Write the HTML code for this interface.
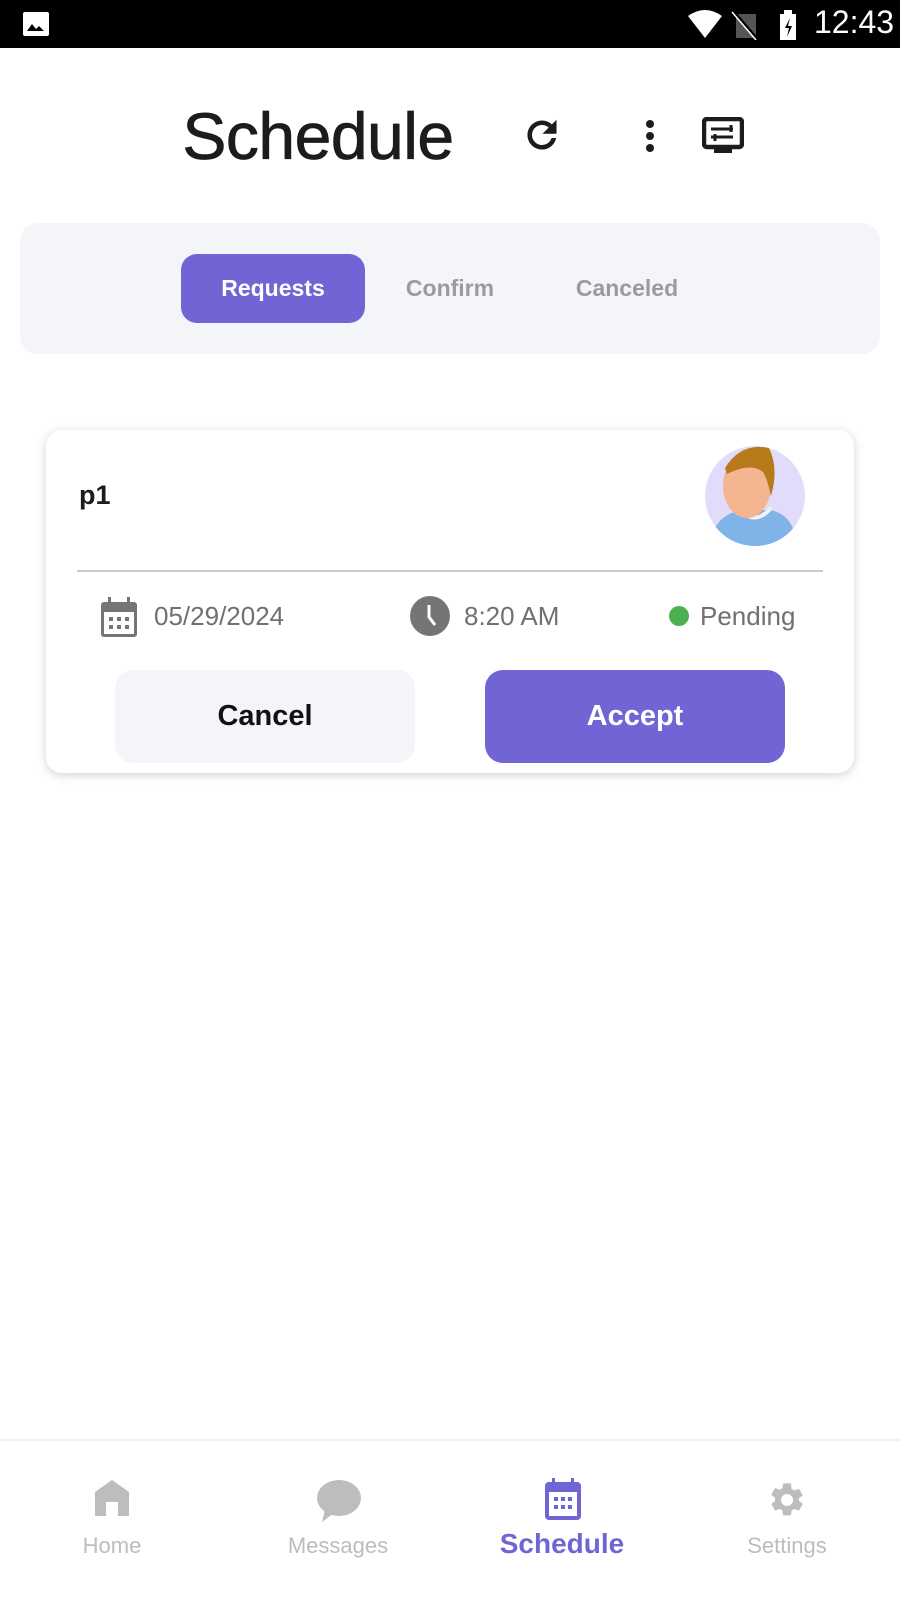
<!DOCTYPE html>
<html><head><meta charset="utf-8"><style>
*{margin:0;padding:0;box-sizing:border-box}
body{width:900px;height:1600px;background:#fff;font-family:"Liberation Sans",sans-serif;position:relative;overflow:hidden}
.a{position:absolute}
.status{left:0;top:0;width:900px;height:48px;background:#000}
.title{left:0;width:636px;text-align:center;top:98px;font-size:66px;color:#1c1c1e;letter-spacing:-0.5px;-webkit-text-stroke:0.8px #1c1c1e}
.tabs{left:20px;top:223px;width:860px;height:131px;background:#f4f5f9;border-radius:18px}
.pill{left:181px;top:254px;width:184px;height:69px;background:#7165d6;border-radius:16px;color:#fff;font-size:23px;font-weight:bold;text-align:center;line-height:69px}
.tab{top:254px;line-height:69px;font-size:23px;font-weight:bold;color:#9a9aa2;text-align:center;width:160px}
.card{left:46px;top:430px;width:808px;height:343px;background:#fff;border-radius:16px;box-shadow:0 2px 10px rgba(0,0,0,.18)}
.info{font-size:26px;color:#707070;top:601px}
.btn{top:670px;width:300px;height:93px;border-radius:18px;text-align:center;line-height:93px;font-size:29px;font-weight:bold}
.nav{left:0;top:1439px;width:900px;height:161px;border-top:2px solid #f2f2f2}
.lbl{top:1533px;width:200px;text-align:center;font-size:22px;color:#bdbdbd}
</style></head><body>
<div class="a status"></div>
<svg class="a" style="left:23px;top:12px" width="26" height="24" viewBox="0 0 26 24"><rect x="0" y="0" width="26" height="24" rx="2" fill="#fff"/><path d="M4 19l5-7 4 5 3-3 5 5z" fill="#000"/></svg>
<svg class="a" style="left:688px;top:8px" width="120" height="32" viewBox="0 0 120 32"><path d="M0 8 Q17 -4 34 8 L17 30Z" fill="#fff"/><rect x="48" y="6" width="20" height="24" fill="#555"/><path d="M46 4 L70 32" stroke="#000" stroke-width="3"/><path d="M44 4 L68 32" stroke="#fff" stroke-width="1.5"/><rect x="92" y="6" width="16" height="26" fill="#fff"/><rect x="96" y="2" width="8" height="5" fill="#fff"/><path d="M102 10 l-5 10 h4 l-2 9 5-11 h-4z" fill="#000"/></svg>
<div class="a" style="left:814px;top:4px;font-size:32px;color:#fff">12:43</div>
<div class="a title">Schedule</div>
<svg class="a" style="left:521px;top:114px" width="42" height="42" viewBox="0 0 24 24"><path fill="#1c1c1e" d="M17.65 6.35A7.96 7.96 0 0 0 12 4a8 8 0 1 0 7.73 10h-2.08A6 6 0 1 1 12 6c1.66 0 3.14.69 4.22 1.78L13 11h7V4l-2.35 2.35z" stroke="#1c1c1e" stroke-width="0.6"/></svg>
<svg class="a" style="left:640px;top:116px" width="20" height="40" viewBox="0 0 20 40"><circle cx="10" cy="8" r="4" fill="#1c1c1e"/><circle cx="10" cy="20" r="4" fill="#1c1c1e"/><circle cx="10" cy="32" r="4" fill="#1c1c1e"/></svg>
<svg class="a" style="left:702px;top:117px" width="42" height="38" viewBox="0 0 42 38"><rect x="2" y="2" width="38" height="28" rx="3" fill="none" stroke="#1c1c1e" stroke-width="4.5"/><rect x="12" y="29" width="18" height="7" fill="#1c1c1e"/><path d="M9 12h22M9 20h22" stroke="#1c1c1e" stroke-width="3"/><path d="M29 8v7M13 17v7" stroke="#1c1c1e" stroke-width="3"/></svg>
<div class="a tabs"></div>
<div class="a pill">Requests</div>
<div class="a tab" style="left:370px">Confirm</div>
<div class="a tab" style="left:547px">Canceled</div>
<div class="a card"></div>
<div class="a" style="left:79px;top:480px;font-size:27px;font-weight:bold;color:#1c1c1e">p1</div>
<svg class="a" style="left:705px;top:446px" width="100" height="100" viewBox="0 0 100 100"><defs><clipPath id="c"><circle cx="50" cy="50" r="50"/></clipPath></defs><circle cx="50" cy="50" r="50" fill="#e2dcfc"/><g clip-path="url(#c)"><path d="M4 100 Q8 70 36 64 L66 64 Q90 70 92 100Z" fill="#80b4e8"/><path d="M36 64 Q50 80 66 62" fill="none" stroke="#f2f2f2" stroke-width="4"/><ellipse cx="42" cy="40" rx="24" ry="32" fill="#f4b590"/><path d="M20 22 Q36 -4 64 2 Q74 22 66 50 Q62 32 58 26 Q46 16 22 28Z" fill="#b87a18"/></g></svg>
<div class="a" style="left:77px;top:570px;width:746px;height:2px;background:#c9c9d6"></div>
<svg class="a" style="left:101px;top:597px" width="36" height="40" viewBox="0 0 36 40"><rect x="0" y="5" width="36" height="35" rx="3" fill="#757575"/><rect x="7" y="0" width="3" height="8" fill="#757575"/><rect x="26" y="0" width="3" height="8" fill="#757575"/><rect x="3" y="15" width="30" height="22" fill="#fff"/><g fill="#757575"><rect x="8" y="20" width="4" height="4"/><rect x="16" y="20" width="4" height="4"/><rect x="24" y="20" width="4" height="4"/><rect x="8" y="28" width="4" height="4"/><rect x="16" y="28" width="4" height="4"/><rect x="24" y="28" width="4" height="4"/></g></svg>
<div class="a info" style="left:154px">05/29/2024</div>
<svg class="a" style="left:410px;top:596px" width="40" height="40" viewBox="0 0 40 40"><circle cx="20" cy="20" r="20" fill="#757575"/><path d="M19 9v12l6 8" stroke="#fff" stroke-width="3" fill="none"/></svg>
<div class="a info" style="left:464px">8:20 AM</div>
<div class="a" style="left:669px;top:606px;width:20px;height:20px;border-radius:50%;background:#4caf50"></div>
<div class="a info" style="left:700px">Pending</div>
<div class="a btn" style="left:115px;background:#f4f5f9;color:#111">Cancel</div>
<div class="a btn" style="left:485px;background:#7165d6;color:#fff">Accept</div>
<div class="a nav"></div>
<svg class="a" style="left:95px;top:1480px" width="34" height="36" viewBox="0 0 34 36"><path d="M0 12 L17 0 L34 12 V36 H23 V22 H11 V36 H0Z" fill="#bdbdbd"/></svg>
<svg class="a" style="left:316px;top:1480px" width="46" height="42" viewBox="0 0 46 42"><ellipse cx="23" cy="18" rx="22" ry="18" fill="#bdbdbd"/><path d="M9 30 L6 42 L18 33Z" fill="#bdbdbd"/></svg>
<svg class="a" style="left:545px;top:1478px" width="36" height="42" viewBox="0 0 36 42"><rect x="0" y="4" width="36" height="38" rx="4" fill="#7165d6"/><rect x="7" y="0" width="3" height="7" fill="#7165d6"/><rect x="26" y="0" width="3" height="7" fill="#7165d6"/><rect x="4" y="14" width="28" height="24" fill="#fff"/><g fill="#7165d6"><rect x="9" y="19" width="4" height="4"/><rect x="16" y="19" width="4" height="4"/><rect x="23" y="19" width="4" height="4"/><rect x="9" y="27" width="4" height="4"/><rect x="16" y="27" width="4" height="4"/><rect x="23" y="27" width="4" height="4"/></g></svg>
<svg class="a" style="left:767px;top:1480px" width="40" height="40" viewBox="0 0 24 24"><path fill="#bdbdbd" d="M19.14 12.94c.04-.3.06-.61.06-.94s-.02-.64-.07-.94l2.030-1.58a.5.5 0 0 0 .12-.61l-1.92-3.32a.5.5 0 0 0-.59-.22l-2.39.96a7 7 0 0 0-1.62-.94l-.36-2.54A.48.48 0 0 0 13.92 2h-3.840a.47.47 0 0 0-.47.41l-.36 2.54c-.59.24-1.13.57-1.62.94l-2.39-.96a.48.48 0 0 0-.59.22L2.74 8.47a.47.47 0 0 0 .12.61l2.03 1.58c-.05.3-.09.63-.09.94s.02.64.07.94l-2.03 1.58a.5.5 0 0 0-.12.61l1.92 3.32c.12.22.37.29.59.22l2.39-.96c.5.38 1.03.7 1.62.94l.36 2.54c.05.24.24.41.48.41h3.84c.24 0 .44-.17.47-.41l.36-2.54c.59-.24 1.13-.56 1.62-.94l2.39.96c.22.08.47 0 .59-.22l1.92-3.32a.48.48 0 0 0-.12-.61l-2.01-1.58zM12 15.6A3.6 3.6 0 1 1 12 8.4a3.6 3.6 0 0 1 0 7.2z"/></svg>
<div class="a lbl" style="left:12px">Home</div>
<div class="a lbl" style="left:238px">Messages</div>
<div class="a lbl" style="left:462px;top:1528px;font-size:28px;font-weight:bold;color:#7165d6">Schedule</div>
<div class="a lbl" style="left:687px">Settings</div>
</body></html>
